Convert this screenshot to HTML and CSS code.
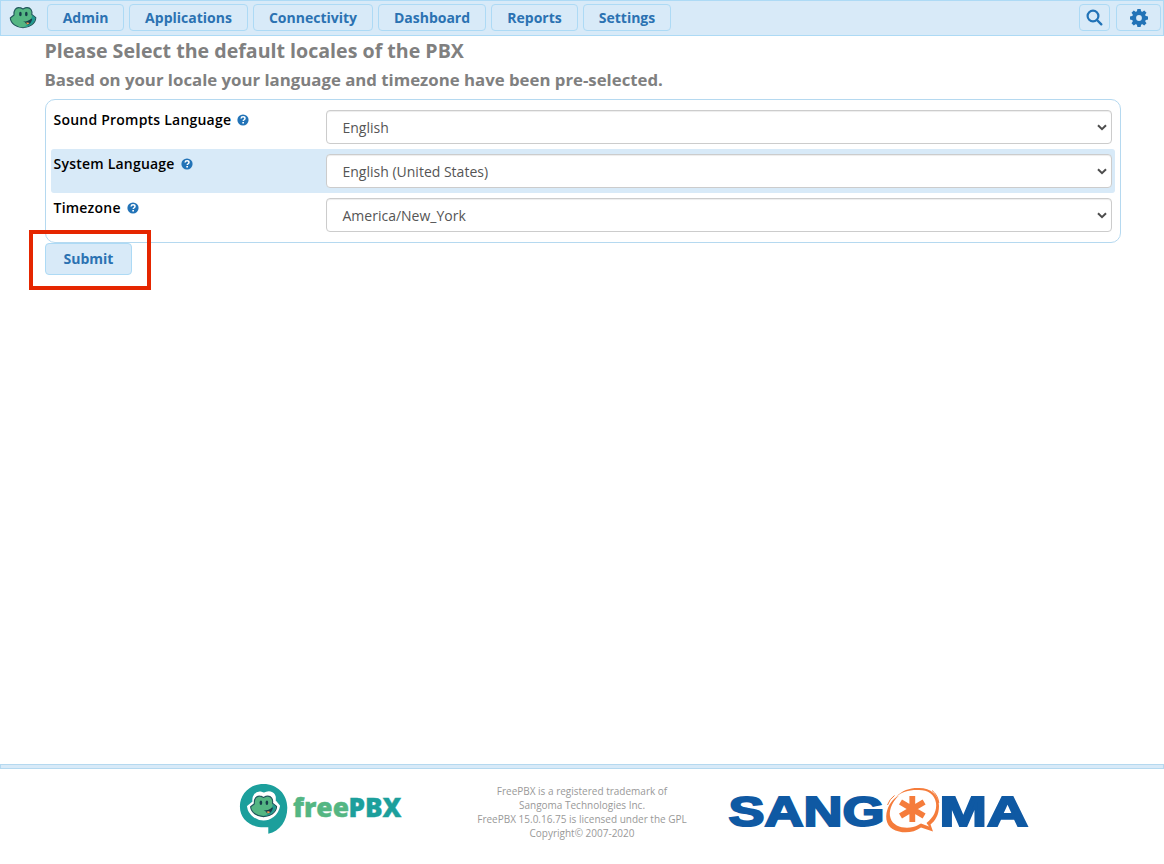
FILE: index.html
```html
<!DOCTYPE html>
<html lang="en">
<head>
<meta charset="utf-8">
<title>FreePBX Administration</title>
<link rel="stylesheet" href="styles.css">
</head>
<body>
<svg class="defs" width="0" height="0">
  <symbol id="frog" viewBox="0 0 28 23">
    <path d="M5 9C4.500 4 7 1.300 10.200 1.600 12 1.700 13 2.400 14 2.900 15 2.400 16 1.700 18 1.600 21.500 1.500 23.500 4.500 22.800 8.500L26.800 11.700C26.500 17.500 20.500 21.700 14 21.700S1.700 17.500 1.300 12Z" fill="#54b683" stroke="#20555b" stroke-width="1.100" stroke-linejoin="round"/>
    <path d="M23 9L26.200 12C25.800 17 20.300 20.800 15 21 19.500 18.500 22.800 14.500 23 9Z" fill="#209a91"/>
    <ellipse cx="11.400" cy="8" rx="1.300" ry="2.200" fill="#173e4b"/>
    <ellipse cx="17.300" cy="8" rx="1.300" ry="2.200" fill="#173e4b"/>
    <path d="M14 15.600Q19 15.800 22.500 12.500L23.200 13.200Q22 18.300 18.500 18.600 16.800 18.300 16 16.300Z" fill="#173e4b"/>
    <path d="M16.900 16.800Q19.300 15.800 20.500 17.300L18.500 18.600Z" fill="#f49b51"/>
  </symbol>
  <symbol id="help" viewBox="0 0 12 12">
    <circle cx="6" cy="6" r="5.600" fill="#2273b7"/>
    <path d="M4.100 4.500C4.200 2.300 8 2.300 8 4.500 8 5.800 6.200 5.700 6.200 7.100" fill="none" stroke="#fff" stroke-width="1.500"/>
    <path d="M5.300 8h1.700v1.500H5.300z" fill="#fff"/>
  </symbol>
</svg>
<header class="navbar">
  <svg class="brand" viewBox="0 0 28 23"><use href="#frog"/></svg>
  <nav class="menu">
    <a class="btn admin">Admin</a>
    <a class="btn applications">Applications</a>
    <a class="btn connectivity">Connectivity</a>
    <a class="btn dashboard">Dashboard</a>
    <a class="btn reports">Reports</a>
    <a class="btn settings">Settings</a>
  </nav>
  <div class="tools">
    <a class="btn search"><svg width="17" height="17" viewBox="0 0 17 17"><circle cx="7" cy="7" r="5.400" fill="none" stroke="#2273b7" stroke-width="2.200"/><path d="M11 11l4.300 4.300" stroke="#2273b7" stroke-width="2.400" stroke-linecap="round"/></svg></a>
    <a class="btn gear"><svg width="18" height="18" viewBox="-9 -9 18 18"><g fill="#2273b7"><path id="tooth" d="M-2.200-6L-1.600-9h3.200L2.200-6V6L1.600 9h-3.200L-2.200 6z"/><use href="#tooth" transform="rotate(45)"/><use href="#tooth" transform="rotate(90)"/><use href="#tooth" transform="rotate(135)"/><circle r="6.900"/></g><circle r="2.900" fill="#d8eaf8"/></svg></a>
  </div>
</header>
<main class="content">
  <h1>Please Select the default locales of the PBX</h1>
  <h2>Based on your locale your language and timezone have been pre-selected.</h2>
  <form>
    <div class="panel">
      <div class="row">
        <label>Sound Prompts Language <svg class="help"><use href="#help"/></svg></label>
        <div class="select">English<svg class="caret" viewBox="0 0 10 7"><path d="M1 1.200l4 4 4-4"/></svg></div>
      </div>
      <div class="row shaded">
        <label>System Language <svg class="help"><use href="#help"/></svg></label>
        <div class="select">English (United States)<svg class="caret" viewBox="0 0 10 7"><path d="M1 1.200l4 4 4-4"/></svg></div>
      </div>
      <div class="row">
        <label>Timezone <svg class="help"><use href="#help"/></svg></label>
        <div class="select">America/New_York<svg class="caret" viewBox="0 0 10 7"><path d="M1 1.200l4 4 4-4"/></svg></div>
      </div>
    </div>
    <div class="actions"><button class="btn submit" type="button">Submit</button><span class="highlight"></span></div>
  </form>
</main>
<footer class="footer">
  <svg class="freepbx" width="164" height="52" viewBox="239 783 164 52">
    <path d="M263.600 784C277 784 287.300 794 287.300 807.700 287.300 821 280 831 268.300 833.700V827.300H263.600C250 827.300 239.900 819 239.900 806.500 239.900 794 250 784 263.600 784Z" fill="#1c9f9c"/>
    <path d="M253.500 802C252.500 796 256 792 260.500 792.500L264 793.700C268 791.500 273.500 791.500 274.800 797V801L279 806C277.500 815 269.500 819.500 263.500 819.500S249 815 248 806.500Z" fill="#fff" stroke="#fff" stroke-width="2" stroke-linejoin="round"/>
    <use href="#frog" x="249.300" y="794" width="28.500" height="24.500"/>
    <text class="wordmark free" x="293" y="817" textLength="56" lengthAdjust="spacingAndGlyphs">free</text>
    <text class="wordmark pbx" x="348.500" y="817" textLength="53" lengthAdjust="spacingAndGlyphs">PBX</text>
  </svg>
  <p class="legal">FreePBX is a registered trademark of<br>Sangoma Technologies Inc.<br>FreePBX 15.0.16.75 is licensed under the GPL<br>Copyright© 2007-2020</p>
  <svg class="sangoma" width="302" height="50" viewBox="728 785 302 50">
    <text class="sangoma-text" x="728.500" y="825.500" textLength="156" lengthAdjust="spacingAndGlyphs">SANG</text>
    <text class="sangoma-text" x="939.500" y="825.500" textLength="88.500" lengthAdjust="spacingAndGlyphs">MA</text>
    <path fill="#f57c3b" fill-rule="evenodd" d="M896 797C902 790 911 787.600 919 788 931 788 939 795 939 806 939 815 935 821 930.500 824.500L933 831.500 921 827.500C915 832 906 833.500 899 831.500 889 829.500 885 822 886.500 813 888 806 892 799 899 795.500 891 803 888.500 812 890.500 818 893 827 905 829 913 827 917 826 919 824.500 921 823.500L929 826.500 926.500 823C934 817 937 810 936 803 934.500 794 928 790 919 790 910 789.500 901 792 896 797Z"/>
    <path d="M894.500 795.500Q889.500 799 887.500 805M932 790.500Q938 795 938.800 803" fill="none" stroke="#f57c3b" stroke-width="1"/>
    <path d="M912.300 796v26M900.500 802l23.600 14M900.500 816l23.600-14" stroke="#f57c3b" stroke-width="5.800"/>
  </svg>
</footer>
</body>
</html>
```
FILE: styles.css
```css
*, *::before { box-sizing: border-box; }
body {
  margin: 0;
  height: 864px;
  display: flex;
  flex-direction: column;
  overflow: hidden;
  background: #fff;
  font: 14px/20px "Open Sans", "Noto Sans", sans-serif;
  color: #555;
}
.defs { position: absolute; }
.navbar {
  display: flex;
  flex: none;
  height: 36px;
  padding: 3px 2px 0 8px;
  border: 1px solid #addaf5;
  background: #d8eaf8;
}
.brand { width: 28px; height: 23px; margin-top: 2px; }
.menu { display: flex; gap: 5px; margin-left: 10px; }
.tools { display: flex; gap: 6px; margin-left: auto; }
.btn {
  display: flex;
  align-items: center;
  justify-content: center;
  height: 27px;
  border: 1px solid #addaf5;
  border-radius: 4px;
  background: #d8eaf8;
  color: #2b72b2;
  font: 700 14px/20px "Open Sans", sans-serif;
}
.admin { width: 77px; }
.applications { width: 119px; }
.connectivity { width: 120px; }
.dashboard { width: 108px; }
.reports { width: 87px; }
.settings { width: 88px; }
.search { width: 31px; }
.gear { width: 45px; }
.content { flex: 1; padding: 0 43px 0 45px; }
h1, h2 { margin: 0 0 0 -.5px; color: #808080; font-weight: 700; white-space: nowrap; }
h1 { padding-top: 2px; font-size: 19.600px; line-height: 26px; }
h2 { padding-top: 4px; font-size: 16.800px; line-height: 24px; }
.panel {
  height: 144px;
  margin-top: 7px;
  padding: 5px;
  border: 1px solid #b5d9f0;
  border-radius: 10px;
}
.row { display: flex; height: 44px; padding: 5px 3px 5px 2.500px; border-radius: 3px; }
.shaded { background: #d8eaf8; }
label {
  display: flex;
  align-items: center;
  width: 272.500px;
  height: 20px;
  color: #000;
  font-weight: 600;
  letter-spacing: .22px;
}
.help { width: 12px; height: 12px; margin: 0 0 0 6px; }
.select {
  display: flex;
  align-items: center;
  justify-content: space-between;
  flex: 1;
  height: 34px;
  padding: 1px 4px 0 15.500px;
  border: 1px solid #ccc;
  border-radius: 4px;
  background: #fff;
  box-shadow: inset 0 1px 1px rgba(0, 0, 0, .075);
}
.caret { width: 10px; height: 7px; }
.caret path { fill: none; stroke: #4d4d4d; stroke-width: 2; }
.actions { position: relative; }
.submit { width: 87px; height: 32px; padding: 0; }
.highlight {
  position: absolute;
  left: -16px;
  top: -13px;
  width: 122px;
  height: 60px;
  border: 4px solid #e52600;
}
.footer {
  position: relative;
  display: grid;
  grid-template-columns: 164px 1fr 302px;
  flex: none;
  height: 100px;
  padding: 14px 134px 0 239px;
}
.footer::before {
  content: "";
  position: absolute;
  top: 0;
  left: 0;
  right: 0;
  height: 5px;
  border: 1px solid #b5d9f0;
  background: #d8eaf8;
}
.footer > .freepbx { margin-top: 5px; }
.footer > .sangoma { margin-top: 7px; }
.legal {
  margin: 6px 0 0;
  padding-left: 33px;
  width: 325px;
  text-align: center;
  color: #999;
  font-size: 10px;
  line-height: 14px;
}
.wordmark { font: 800 26px "Open Sans", sans-serif; }
.free { fill: #54b683; stroke: #54b683; stroke-width: .4px; }
.pbx { fill: #1c9f9c; stroke: #1c9f9c; stroke-width: .4px; }
.sangoma-text {
  font: bold 42.500px "Liberation Sans", Arial, sans-serif;
  fill: #0f59a3;
  stroke: #0f59a3;
  stroke-width: 2px;
}
```
